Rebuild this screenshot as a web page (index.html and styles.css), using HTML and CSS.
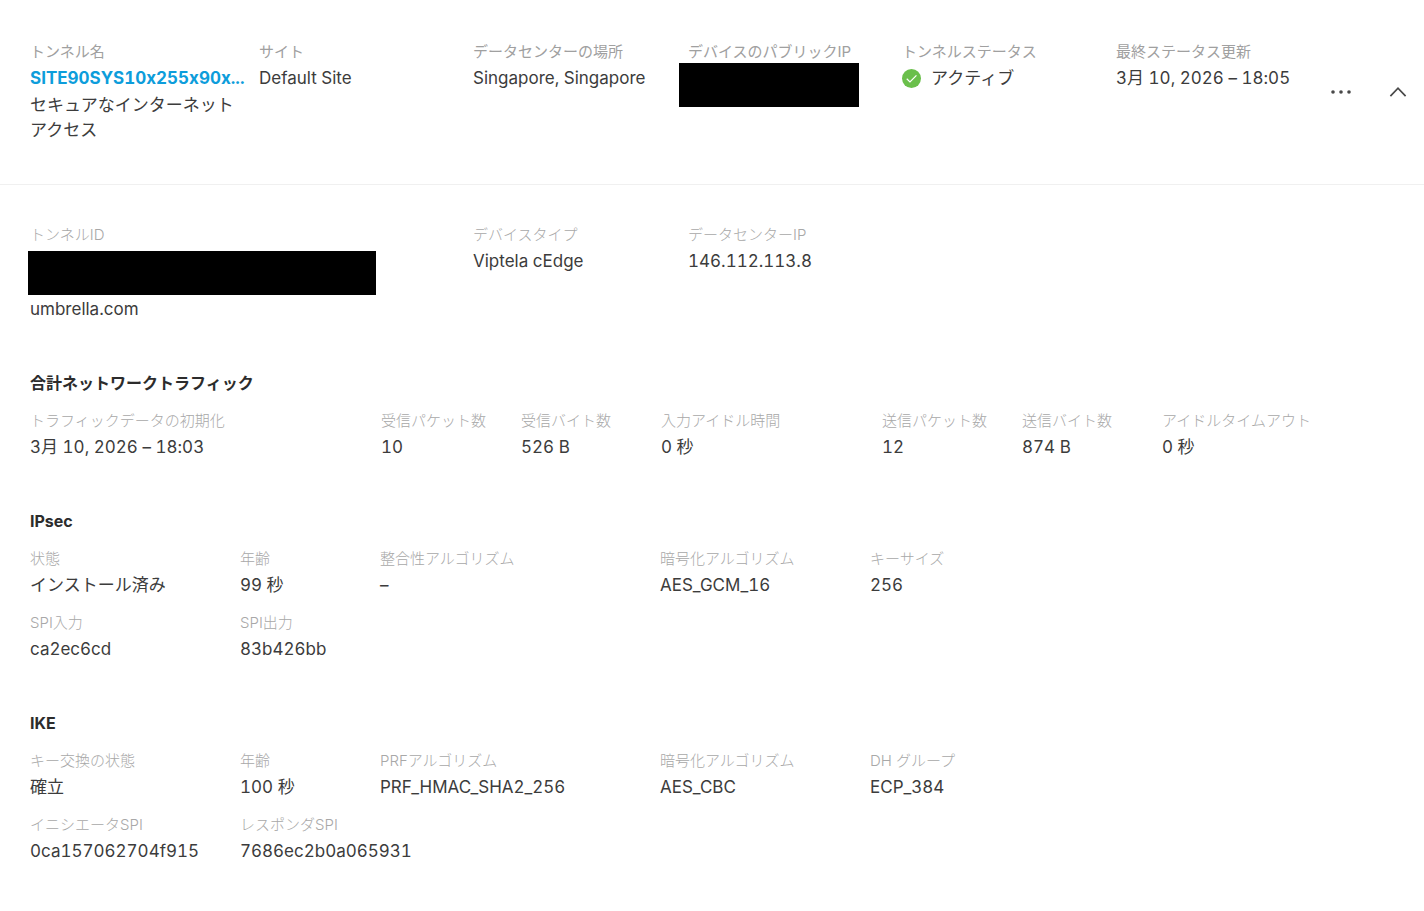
FILE: index.html
```html
<!DOCTYPE html>
<html lang="ja">
<head>
<meta charset="utf-8">
<meta name="viewport" content="width=device-width, initial-scale=1">
<title>SITE90SYS10x255x90x...</title>
<link rel="stylesheet" href="styles.css">
</head>
<body>
<main class="tunnel">
  <header class="summary">
    <dl class="grid summary-grid">
      <div class="field"><dt>トンネル名</dt><dd><a class="tunnel-link" href="#">SITE90SYS10x255x90x...</a></dd><dd class="service">セキュアなインターネットアクセス</dd></div>
      <div class="field"><dt>サイト</dt><dd>Default Site</dd></div>
      <div class="field"><dt>データセンターの場所</dt><dd>Singapore, Singapore</dd></div>
      <div class="field"><dt>デバイスのパブリックIP</dt><dd class="redacted"><span class="mask mask-ip"></span></dd></div>
      <div class="field"><dt>トンネルステータス</dt><dd class="status"><svg class="status-icon" viewBox="0 0 20 20" aria-hidden="true"><circle cx="10" cy="10" r="10" fill="#6abf4b"/><path d="M5 10.3l3.4 3.2 6.8-6.8" fill="none" stroke="#fff" stroke-width="1.3"/></svg>アクティブ</dd></div>
      <div class="field"><dt>最終ステータス更新</dt><dd>3月 10, 2026 – 18:05</dd></div>
    </dl>
    <div class="actions">
      <button class="icon-button" type="button" aria-label="その他"><svg width="22" height="6" viewBox="0 0 22 6"><g fill="#494949"><circle cx="3" cy="3" r="1.8"/><circle cx="11" cy="3" r="1.8"/><circle cx="19" cy="3" r="1.8"/></g></svg></button>
      <button class="icon-button" type="button" aria-label="折りたたむ" aria-expanded="true"><svg width="18" height="12" viewBox="0 0 18 12"><path d="M1.4 10.2L9 2.2l7.6 8" fill="none" stroke="#494949" stroke-width="1.7"/></svg></button>
    </div>
  </header>

  <div class="details">
    <dl class="grid device-grid">
      <div class="field"><dt>トンネルID</dt><dd class="redacted tunnel-id"><span class="mask mask-id"></span>umbrella.com</dd></div>
      <div class="field"><dt>デバイスタイプ</dt><dd>Viptela cEdge</dd></div>
      <div class="field"><dt>データセンターIP</dt><dd>146.112.113.8</dd></div>
    </dl>

    <section class="section">
      <h2>合計ネットワークトラフィック</h2>
      <dl class="grid traffic-grid">
        <div class="field"><dt>トラフィックデータの初期化</dt><dd>3月 10, 2026 – 18:03</dd></div>
        <div class="field"><dt>受信パケット数</dt><dd>10</dd></div>
        <div class="field"><dt>受信バイト数</dt><dd>526 B</dd></div>
        <div class="field"><dt>入力アイドル時間</dt><dd>0 秒</dd></div>
        <div class="field"><dt>送信パケット数</dt><dd>12</dd></div>
        <div class="field"><dt>送信バイト数</dt><dd>874 B</dd></div>
        <div class="field"><dt>アイドルタイムアウト</dt><dd>0 秒</dd></div>
      </dl>
    </section>

    <section class="section">
      <h2>IPsec</h2>
      <dl class="grid protocol-grid">
        <div class="field"><dt>状態</dt><dd>インストール済み</dd></div>
        <div class="field"><dt>年齢</dt><dd>99 秒</dd></div>
        <div class="field"><dt>整合性アルゴリズム</dt><dd>–</dd></div>
        <div class="field"><dt>暗号化アルゴリズム</dt><dd>AES_GCM_16</dd></div>
        <div class="field"><dt>キーサイズ</dt><dd>256</dd></div>
        <div class="field"><dt>SPI入力</dt><dd>ca2ec6cd</dd></div>
        <div class="field wide"><dt>SPI出力</dt><dd>83b426bb</dd></div>
      </dl>
    </section>

    <section class="section">
      <h2>IKE</h2>
      <dl class="grid protocol-grid">
        <div class="field"><dt>キー交換の状態</dt><dd>確立</dd></div>
        <div class="field"><dt>年齢</dt><dd>100 秒</dd></div>
        <div class="field"><dt>PRFアルゴリズム</dt><dd>PRF_HMAC_SHA2_256</dd></div>
        <div class="field"><dt>暗号化アルゴリズム</dt><dd>AES_CBC</dd></div>
        <div class="field"><dt>DH グループ</dt><dd>ECP_384</dd></div>
        <div class="field"><dt>イニシエータSPI</dt><dd>0ca157062704f915</dd></div>
        <div class="field wide"><dt>レスポンダSPI</dt><dd>7686ec2b0a065931</dd></div>
      </dl>
    </section>
  </div>
</main>
</body>
</html>
```
FILE: styles.css
```css
* {
  box-sizing: border-box;
}

body {
  margin: 0;
  background: #fff;
  color: #3c3c3c;
  font-family: Inter, "Noto Sans CJK JP", sans-serif;
  font-size: 17px;
  font-variant-ligatures: no-contextual;
  font-variant-numeric: tabular-nums;
  line-height: 25px;
}

dl,
dd,
h2 {
  margin: 0;
}

.grid {
  display: grid;
  row-gap: 11px;
}

.field {
  min-width: 0;
}

dt {
  margin-bottom: 1px;
  color: #a8a8a8;
  font-size: 15px;
  font-weight: 300;
  line-height: 27px;
  white-space: nowrap;
}

dd {
  white-space: nowrap;
}

.summary {
  display: flex;
  padding: 38px 0 41px 30px;
  border-bottom: 1px solid #f0f0f0;
}

.summary dt {
  color: #a0a0a0;
  font-weight: 400;
}

.summary-grid {
  flex: 1;
  grid-template-columns: 229fr 214fr 215fr 214fr 214fr 209fr;
}

.tunnel-link {
  color: #0d9ddb;
  font-weight: 700;
  text-decoration: none;
}

.service {
  margin-top: 2px;
  padding-right: 16px;
  white-space: normal;
}

.status {
  display: flex;
  align-items: center;
  gap: 10px;
}

.status-icon {
  width: 19px;
  height: 19px;
}

.redacted {
  position: relative;
  min-height: 25px;
}

.mask {
  position: absolute;
  height: 44px;
  background: #000;
}

.mask-ip {
  top: -3px;
  left: -9px;
  width: 180px;
}

.mask-id {
  top: 2px;
  left: -2px;
  width: 348px;
}

.tunnel-id {
  padding-top: 48px;
}

.actions {
  display: flex;
  align-items: flex-start;
  gap: 25px;
  padding: 38px 10px 0 0;
}

.icon-button {
  display: flex;
  align-items: center;
  justify-content: center;
  width: 32px;
  height: 32px;
  padding: 0;
  border: 0;
  background: none;
  cursor: pointer;
}

.details {
  padding: 36px 0 48px 30px;
}

.device-grid {
  grid-template-columns: 443fr 215fr 736fr;
}

.section {
  margin-top: 50px;
}

.section h2 {
  margin-bottom: 13px;
  color: #2c2c2c;
  font-size: 16px;
  font-weight: 700;
  line-height: 22px;
}

.traffic-grid {
  grid-template-columns: 351fr 140fr 140fr 221fr 140fr 140fr 262fr;
}

.protocol-grid {
  grid-template-columns: 210fr 140fr 280fr 210fr 554fr;
}

.wide {
  grid-column: span 2;
}
```
